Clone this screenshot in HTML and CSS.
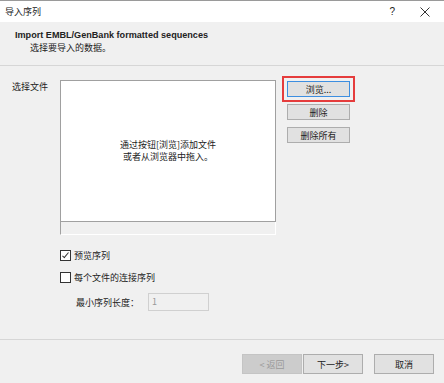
FILE: index.html
```html
<!DOCTYPE html>
<html lang="zh-CN">
<head>
    <meta charset="UTF-8">
    <title>导入序列</title>
    <link rel="stylesheet" href="styles.css">
</head>
<body>

    <!-- 标题栏 -->
    <div class="titlebar">
        <span class="title">导入序列</span>
        <div class="title-buttons">
            <span class="help">?</span>
            <span class="close">
                <svg width="10" height="10" viewBox="0 0 10 10">
                    <path d="M0.5 0.5 L9.5 9.5 M9.5 0.5 L0.5 9.5" stroke="#333" stroke-width="1" fill="none"/>
                </svg>
            </span>
        </div>
    </div>

    <!-- 页头 -->
    <div class="header">
        <div class="header-title">Import EMBL/GenBank formatted sequences</div>
        <div class="header-sub">选择要导入的数据。</div>
    </div>

    <!-- 主体 -->
    <div class="main">
        <div class="file-row">
            <div class="label">选择文件</div>
            <div class="list-wrap">
                <div class="file-list">
                    <p>通过按钮[浏览]添加文件<br>或者从浏览器中拖入。</p>
                </div>
                <div class="list-strip"></div>
            </div>
            <div class="side-buttons">
                <button class="btn btn-focus">浏览...</button>
                <button class="btn">删除</button>
                <button class="btn">删除所有</button>
            </div>
        </div>

        <div class="options">
            <label class="check"><span class="box checked"></span>预览序列</label>
            <label class="check"><span class="box"></span>每个文件的连接序列</label>
            <div class="min-len">
                <span>最小序列长度：</span>
                <div class="num-input">1</div>
            </div>
        </div>
    </div>

    <!-- 底部按钮 -->
    <div class="footer">
        <button class="btn btn-big btn-disabled">&lt;&nbsp;返回</button>
        <button class="btn btn-big">下一步&gt;</button>
        <button class="btn btn-big btn-cancel">取消</button>
    </div>

</body>
</html>
```

FILE: styles.css
```css
body {
    margin: 0;
    width: 444px;
    height: 383px;
    display: flex;
    flex-direction: column;
    background-color: #f0f0f0;
    font-family: "Noto Sans CJK SC", "Noto Sans", sans-serif;
    font-size: 9px;
    color: #222;
    overflow: hidden;
}

/* 标题栏 */
.titlebar {
    height: 22px;
    background-color: #fff;
    border-top: 1px solid #9a9a9a;
    box-sizing: border-box;
    display: flex;
    align-items: center;
    justify-content: space-between;
    padding-left: 5px;
}

.title-buttons {
    display: flex;
    align-items: center;
}

.help {
    font-family: "Liberation Sans", sans-serif;
    font-size: 10px;
    margin-right: 25px;
}

.close {
    display: flex;
    margin-right: 14px;
}

/* 页头 */
.header {
    height: 44px;
    box-sizing: border-box;
    border-bottom: 1px solid #d6d6d6;
    padding: 7px 0 0 15px;
}

.header-title {
    font-family: "Liberation Sans", sans-serif;
    font-weight: bold;
    font-size: 9.1px;
    line-height: 13px;
}

.header-sub {
    padding-left: 15px;
    line-height: 12px;
}

/* 主体 */
.main {
    flex: 1;
    padding: 14px 0 0 12px;
}

.file-row {
    display: flex;
}

.label {
    width: 48px;
    line-height: 14px;
}

.list-wrap {
    width: 216px;
}

.file-list {
    height: 142px;
    box-sizing: border-box;
    background-color: #fff;
    border: 1px solid #a0a0a0;
    display: flex;
    align-items: center;
    justify-content: center;
}

.file-list p {
    margin: 0;
    line-height: 12px;
    text-align: center;
}

.list-strip {
    height: 13px;
    box-sizing: border-box;
    border-left: 1px solid #a0a0a0;
    border-right: 1px solid #fff;
    border-bottom: 1px solid #fff;
}

.side-buttons {
    display: flex;
    flex-direction: column;
    gap: 7px;
    margin-left: 11px;
    margin-top: 1px;
}

.btn {
    width: 63px;
    height: 16px;
    padding: 0;
    background-color: #e1e1e1;
    border: 1px solid #adadad;
    font-family: inherit;
    font-size: 9px;
    color: #222;
}

.btn-focus {
    border-color: #3d8ee0;
    outline: 2px solid #e53c3c;
    outline-offset: 3px;
    border-radius: 0;
}

/* 选项 */
.options {
    margin: 14px 0 0 48px;
}

.check {
    display: flex;
    align-items: center;
    height: 12px;
    margin-bottom: 10px;
}

.box {
    width: 9px;
    height: 9px;
    border: 1px solid #333;
    background-color: #fff;
    margin-right: 3px;
    position: relative;
}

.box.checked::after {
    content: "";
    position: absolute;
    left: 3px;
    top: 0;
    width: 2px;
    height: 6px;
    border-right: 1px solid #333;
    border-bottom: 1px solid #333;
    transform: rotate(40deg);
}

.min-len {
    display: flex;
    align-items: center;
    padding-left: 16px;
}

.min-len span {
    width: 72px;
}

.num-input {
    width: 61px;
    height: 18px;
    box-sizing: border-box;
    border: 1px solid #d0d0d0;
    background-color: #f0f0f0;
    color: #999;
    padding-left: 3px;
    line-height: 16px;
}

/* 底部 */
.footer {
    height: 44px;
    box-sizing: border-box;
    border-top: 1px solid #d6d6d6;
    display: flex;
    justify-content: flex-end;
    padding: 14px 10px 0 0;
}

.btn-big {
    width: 60px;
    height: 20px;
}

.btn-disabled {
    background-color: #cccccc;
    border-color: #c4c4c4;
    color: #9a9a9a;
    margin-right: 1px;
}

.btn-cancel {
    margin-left: 11px;
}
```
